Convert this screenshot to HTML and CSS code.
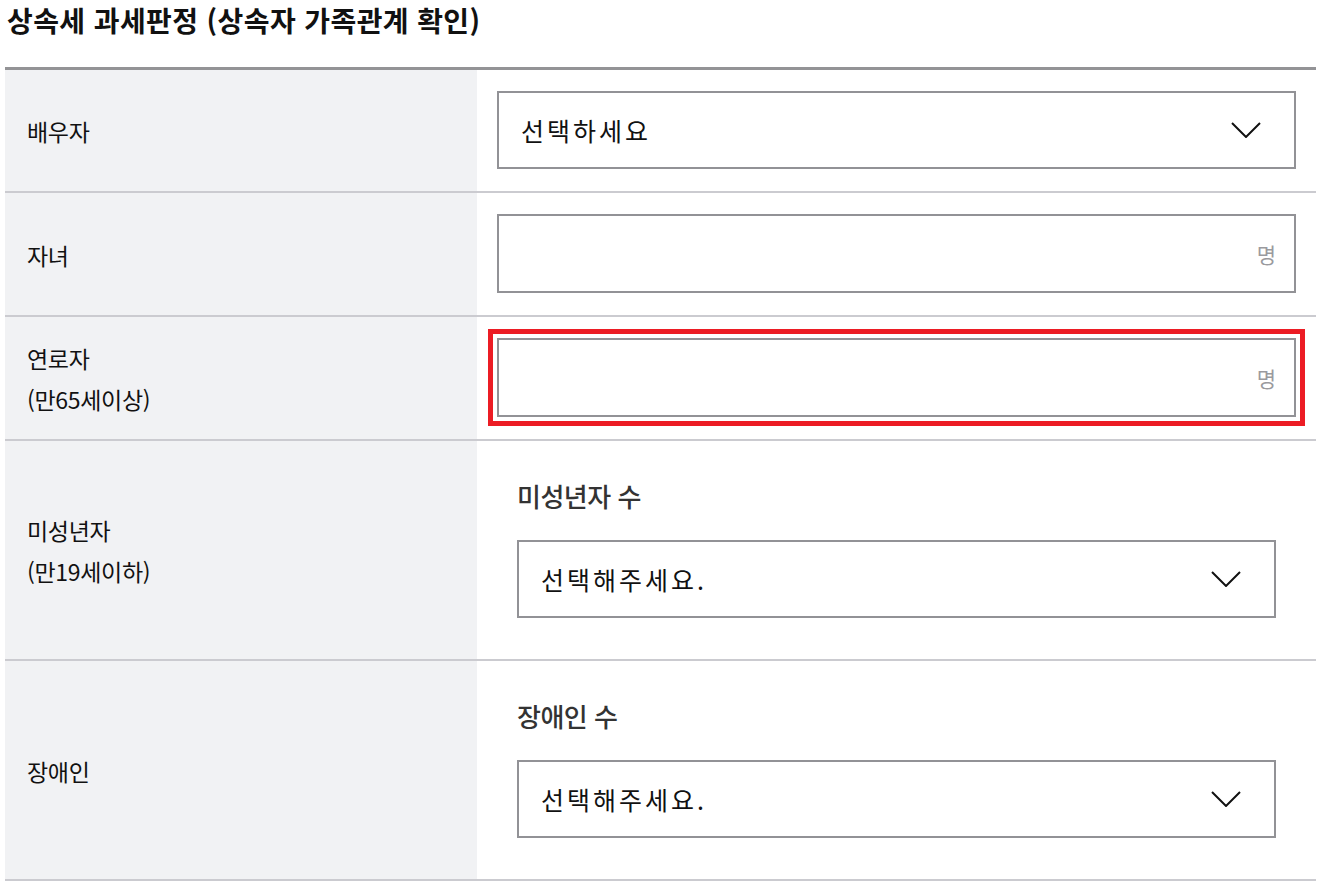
FILE: index.html
```html
<!DOCTYPE html>
<html lang="ko">

<head>
    <meta charset="UTF-8">
    <meta name="viewport" content="width=device-width, initial-scale=1.0">
    <title>상속세 과세판정</title>
    <link rel="stylesheet" href="styles.css">
</head>

<body>
    <div class="container">
        <h2 class="page-title">상속세 과세판정 (상속자 가족관계 확인)</h2>

        <div class="form-table">
            <div class="form-row">
                <div class="form-label">배우자</div>
                <div class="form-field">
                    <div class="select-box">
                        <span class="select-text">선택하세요</span>
                        <svg class="chevron" width="30" height="16" viewBox="0 0 30 16">
                            <polyline points="1,1 15,15 29,1" fill="none" stroke="#111" stroke-width="2"/>
                        </svg>
                    </div>
                </div>
            </div>

            <div class="form-row">
                <div class="form-label">자녀</div>
                <div class="form-field">
                    <div class="unit-input">
                        <input type="text">
                        <span class="unit">명</span>
                    </div>
                </div>
            </div>

            <div class="form-row">
                <div class="form-label">연로자<br>(만65세이상)</div>
                <div class="form-field">
                    <div class="unit-input is-focused">
                        <input type="text">
                        <span class="unit">명</span>
                    </div>
                </div>
            </div>

            <div class="form-row">
                <div class="form-label">미성년자<br>(만19세이하)</div>
                <div class="form-field">
                    <div class="sub-group">
                        <h3 class="sub-title">미성년자 수</h3>
                        <div class="select-box">
                            <span class="select-text">선택해주세요.</span>
                            <svg class="chevron" width="30" height="16" viewBox="0 0 30 16">
                                <polyline points="1,1 15,15 29,1" fill="none" stroke="#111" stroke-width="2"/>
                            </svg>
                        </div>
                    </div>
                </div>
            </div>

            <div class="form-row">
                <div class="form-label">장애인</div>
                <div class="form-field">
                    <div class="sub-group">
                        <h3 class="sub-title">장애인 수</h3>
                        <div class="select-box">
                            <span class="select-text">선택해주세요.</span>
                            <svg class="chevron" width="30" height="16" viewBox="0 0 30 16">
                                <polyline points="1,1 15,15 29,1" fill="none" stroke="#111" stroke-width="2"/>
                            </svg>
                        </div>
                    </div>
                </div>
            </div>
        </div>
    </div>
</body>

</html>
```

FILE: styles.css
```css
body {
    margin: 0;
    font-family: "Noto Sans CJK KR", "Noto Sans", sans-serif;
    color: #111;
    background-color: #fff;
}

.container {
    width: 1311px;
    margin-left: 5px;
}

.page-title {
    margin: 0 0 27px 2px;
    font-size: 28px;
    line-height: 40px;
    font-weight: 700;
    letter-spacing: 0.4px;
    color: #111;
}

.form-table {
    border-top: 3px solid #939396;
}

.form-row {
    display: flex;
    border-bottom: 2px solid #cbcbd0;
}

.form-label {
    width: 450px;
    flex-shrink: 0;
    display: flex;
    align-items: center;
    padding: 2px 0 0 22px;
    background-color: #f1f2f4; /* light gray header column */
    font-size: 23px;
    line-height: 41px;
    letter-spacing: -0.3px;
}

.form-field {
    flex: 1;
    padding: 21px 20px 22px 20px;
}

.select-box {
    display: flex;
    align-items: center;
    justify-content: space-between;
    height: 78px;
    box-sizing: border-box;
    padding: 0 33px 0 22px;
    border: 2px solid #929296;
    background-color: #fff;
}

.select-text {
    font-size: 25px;
    letter-spacing: 3px;
    color: #111;
}

.chevron {
    display: block;
}

.unit-input {
    display: flex;
    align-items: center;
    height: 79px;
    box-sizing: border-box;
    padding: 0 18px 0 22px;
    border: 2px solid #929296;
    background-color: #fff;
}

.unit-input input {
    flex: 1;
    min-width: 0;
    border: none;
    outline: none;
    font-family: inherit;
    font-size: 22px;
    background: transparent;
}

.unit {
    font-size: 21px;
    color: #9a9a9e;
}

.unit-input.is-focused {
    outline: 5px solid #ec1c24; /* red focus ring */
    outline-offset: 4px;
}

.form-field:has(.sub-group) {
    padding: 20px;
}

.sub-group {
    padding: 18px 20px 21px 20px;
}

.sub-title {
    margin: 0 0 27px 0;
    font-size: 26px;
    line-height: 34px;
    font-weight: 500;
    letter-spacing: -0.5px;
    color: #333;
}
```
